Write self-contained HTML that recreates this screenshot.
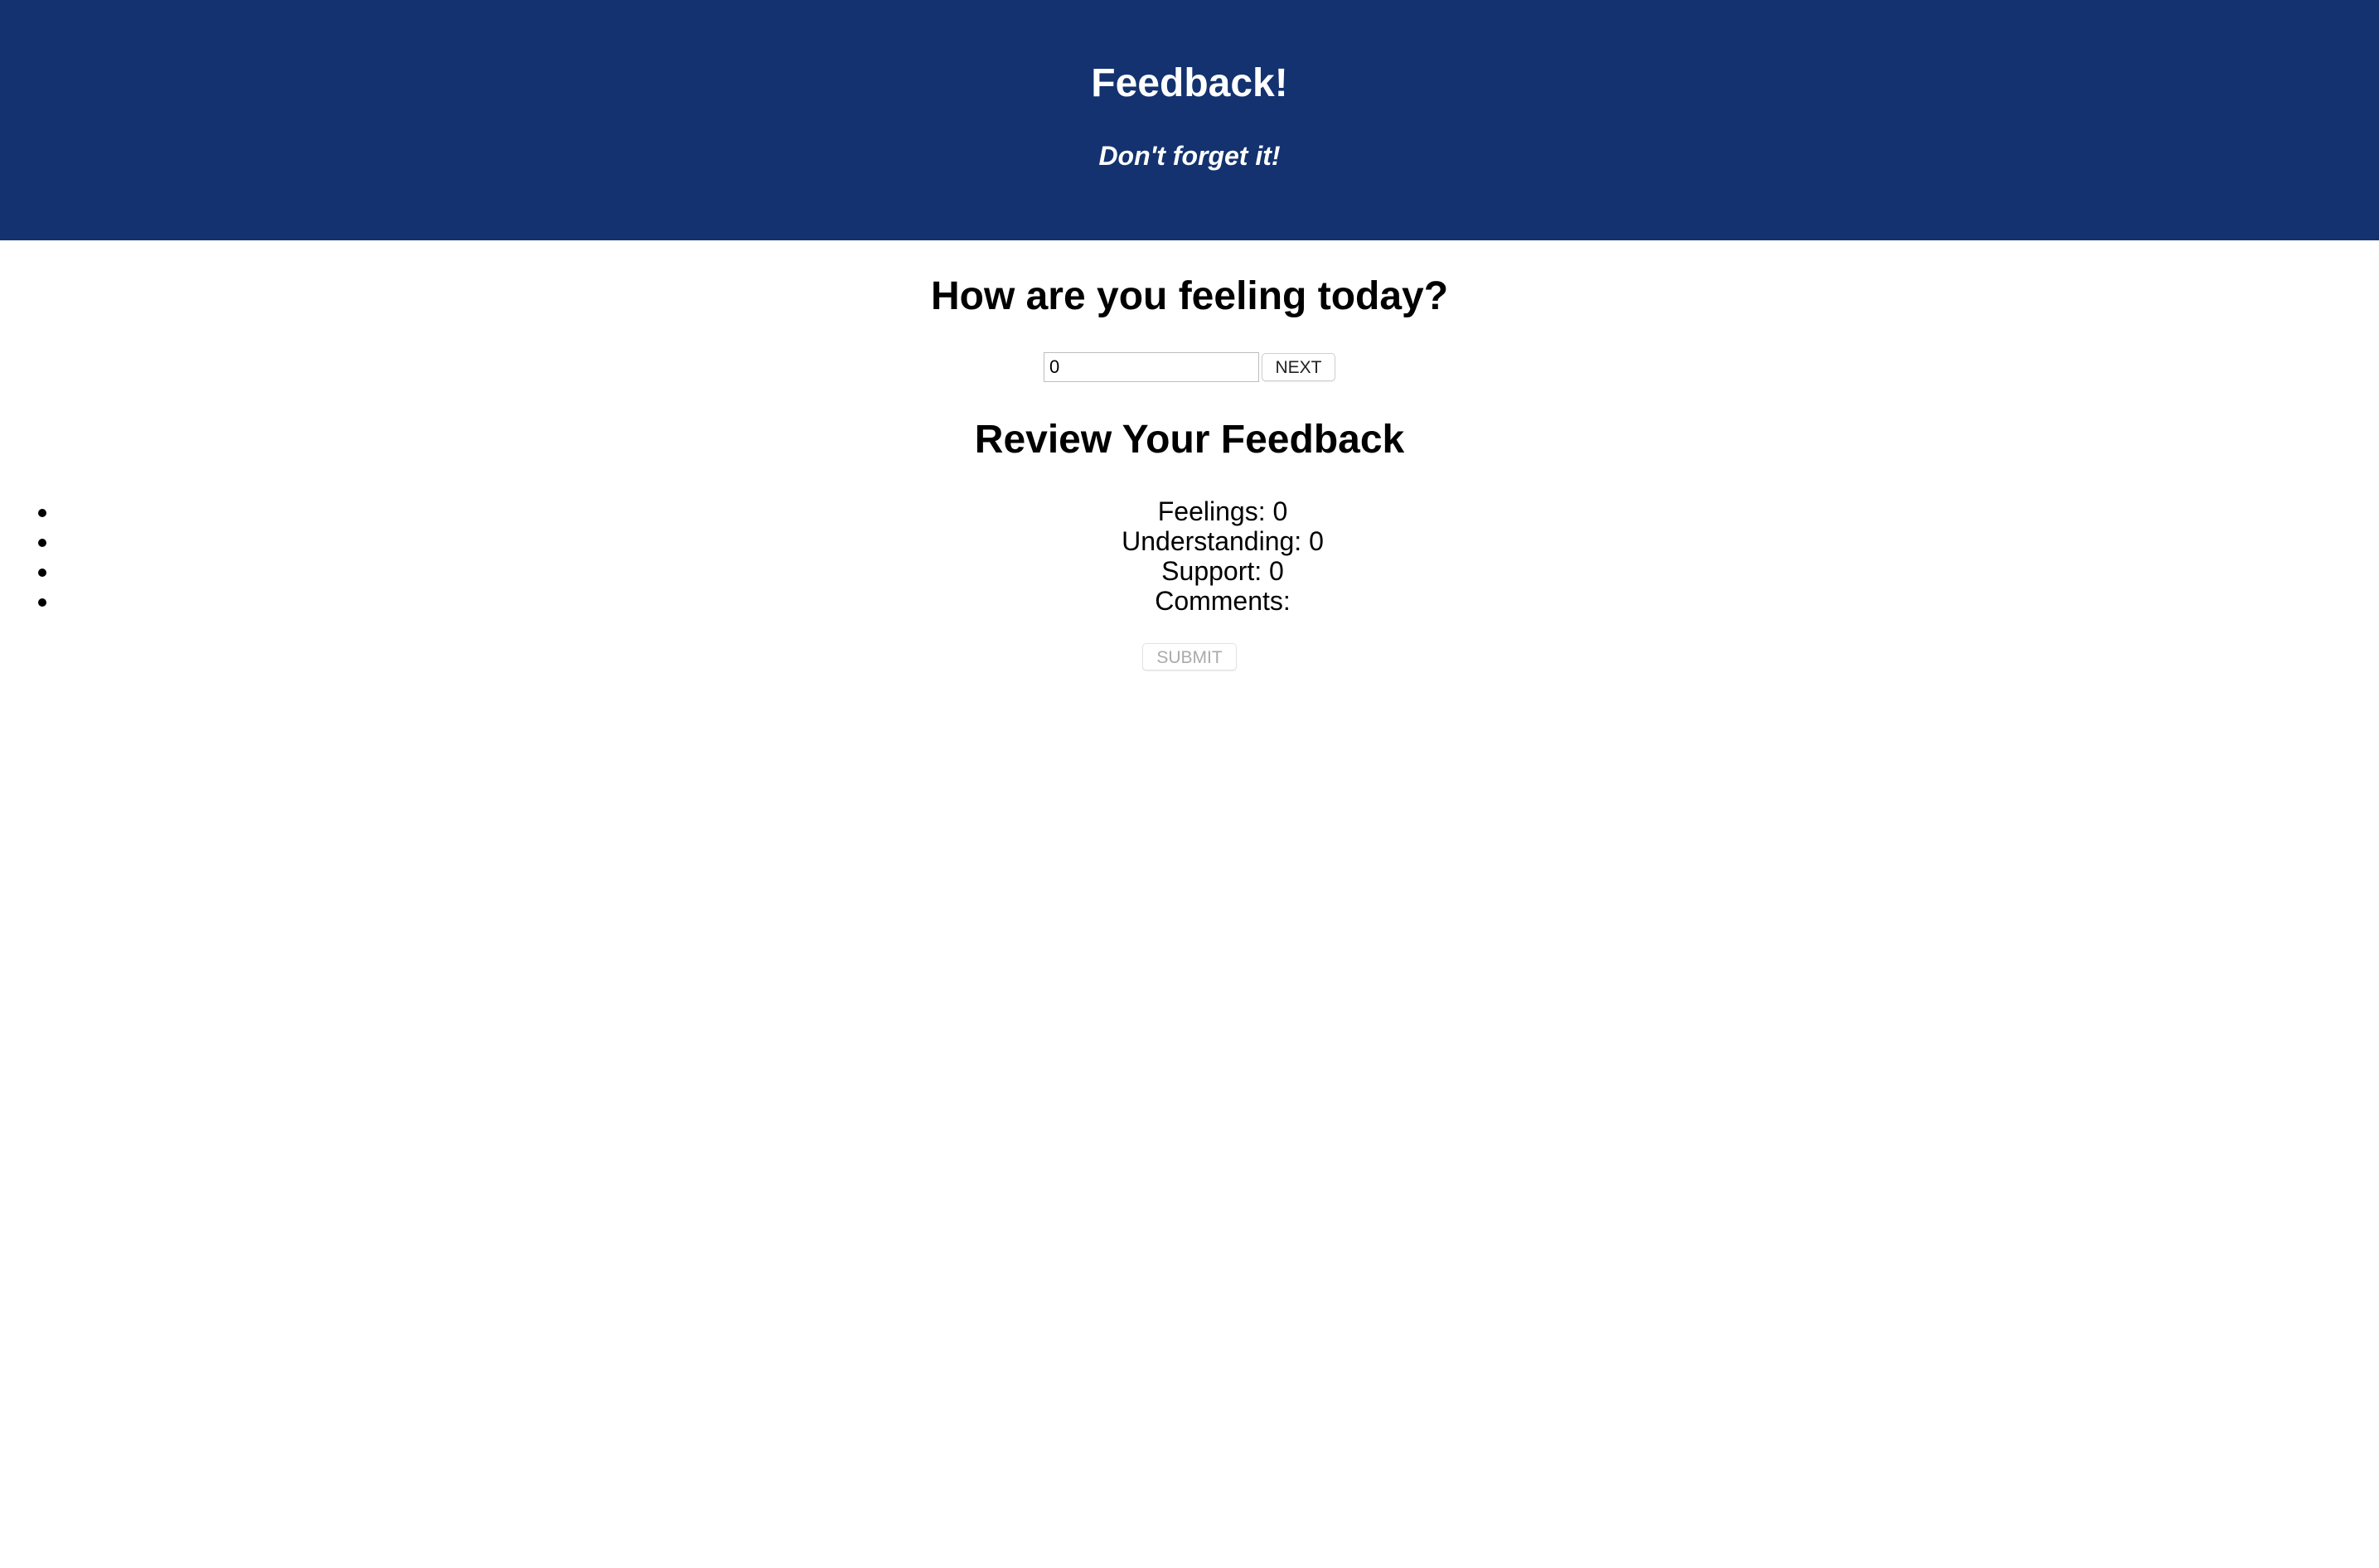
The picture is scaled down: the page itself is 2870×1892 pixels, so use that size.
<!DOCTYPE html>
<html><head><meta charset="utf-8"><style>
html,body{margin:0;padding:0;width:2870px;height:1892px;background:#fff;overflow:hidden;font-family:"Liberation Sans",Arial,sans-serif;}
.hdr{position:absolute;left:0;top:0;width:2870px;height:290px;background:#13326f;}
.t{position:absolute;left:0;width:2870px;text-align:center;line-height:1;white-space:nowrap;}
.inp{position:absolute;left:1259px;top:425px;border:1px solid #bdbdbd;background:#fff;font-size:22px;line-height:34px;padding-left:6px;box-sizing:border-box;width:260px;height:36px;}
.btn{position:absolute;box-sizing:border-box;border:1px solid #cfcfcf;border-radius:5px;background:#fff;text-align:center;box-shadow:0 1px 1px rgba(0,0,0,.08);}
ul{position:absolute;left:0;top:599px;width:2870px;margin:0;padding:0 0 0 80px;box-sizing:border-box;font-size:32px;line-height:36px;text-align:center;list-style:none;}
li{position:relative;}
li::before{content:"";position:absolute;left:-34px;top:15px;width:10px;height:10px;border-radius:50%;background:#000;}
</style></head><body>
<div class="hdr"></div>
<div class="t" style="top:77px;font-size:48px;font-weight:bold;color:#fff;">Feedback!</div>
<div class="t" style="top:172px;font-size:32px;font-weight:bold;font-style:italic;color:#fff;">Don't forget it!</div>
<div class="t" style="top:334px;font-size:48px;font-weight:bold;">How are you feeling today?</div>
<div class="inp">0</div>
<div class="btn" style="left:1522px;top:426px;width:89px;height:34px;font-size:21px;line-height:34px;color:#222;">NEXT</div>
<div class="t" style="top:507px;font-size:48px;font-weight:bold;">Review Your Feedback</div>
<ul><li>Feelings: 0</li><li>Understanding: 0</li><li>Support: 0</li><li>Comments:</li></ul>
<div class="btn" style="left:1378px;top:776px;width:114px;height:33px;font-size:21px;line-height:34px;color:#aaa;border-color:#e2e2e2;">SUBMIT</div>
</body></html>
